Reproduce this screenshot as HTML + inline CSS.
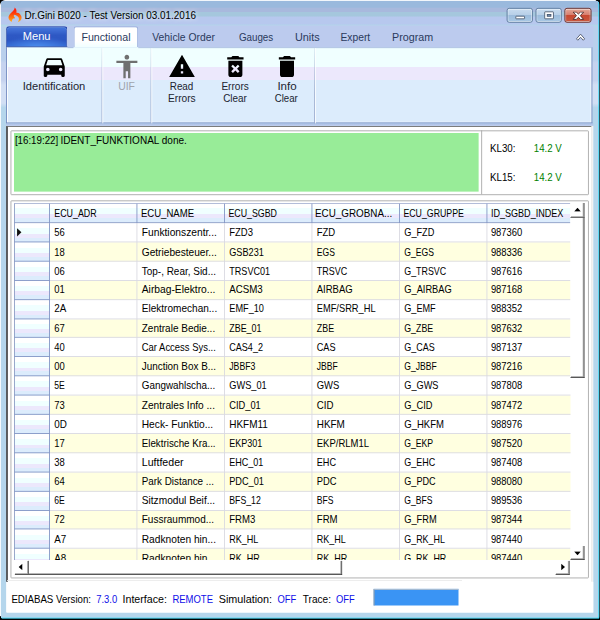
<!DOCTYPE html>
<html lang="en">
<head>
<meta charset="utf-8">
<title>Dr.Gini B020 - Test Version 03.01.2016</title>
<style>

html,body{margin:0;padding:0;background:#fff;}
body{width:600px;height:620px;overflow:hidden;position:relative;font-family:"Liberation Sans", sans-serif;}
#root{position:absolute;left:0;top:0;width:686px;height:709px;transform:scale(0.875);transform-origin:0 0;overflow:hidden;background:#fff;}
#root div,#root span,#root svg{position:absolute;box-sizing:border-box;}
.tx{white-space:pre;line-height:1;transform-origin:0 0;}
#t_title{text-shadow:0 0 5px rgba(255,255,255,.75),0 0 9px rgba(255,255,255,.5);}
.gc{white-space:pre;line-height:1;transform-origin:0 0;font-size:12px;color:#000;}
.hd{background:linear-gradient(#fff 0,#fff 27%,#f0ffff 27%,#f0ffff 55%,#ece8fc 55%,#ece8fc 75%,#dcecfc 75%,#dcecfc 100%);}

</style>
</head>
<body>
<div id="root">
<div style="left:0;top:0;width:686px;height:709px;background:linear-gradient(#b9d0ec 0,#b9d0ec 68px,#c6d3ef 72px,#c6d3ef 92px,#d2dff4 97px,#d2dff4 118px,#b5d6ec 123px,#b5d6ec 100%);"></div>
<div style="left:0;top:0;width:686px;height:30px;background:linear-gradient(#9ab9dd 0,#9ab9dd 28%,#a8b9dd 30%,#a8b9dd 45%,#a5c7dd 47%,#a5c7dd 60%,#b7c8ee 66%,#b7c8ee 92%,#b0d8e8 96%);"></div>
<div style="left:0;top:0;width:686px;height:1px;background:#fff;"></div>
<div style="left:0;top:0;width:1px;height:706px;background:#fff;"></div>
<div style="left:683.5px;top:0;width:1.3px;height:709px;background:#10e0ff;"></div>
<div style="left:684.8px;top:0;width:1.2px;height:709px;background:#000;"></div>
<div style="left:0;top:705.7px;width:686px;height:1.3px;background:#10e0ff;"></div>
<div style="left:0;top:707px;width:686px;height:2px;background:#000;"></div>
<div style="left:0;top:0;width:5px;height:5px;background:radial-gradient(circle at 100% 100%,rgba(0,0,0,0) 4.2px,#000 5px);"></div>
<div style="left:681px;top:0;width:5px;height:5px;background:radial-gradient(circle at 0 100%,rgba(0,0,0,0) 3.8px,#000 4.6px);"></div>
<div style="left:0;top:704px;width:5px;height:5px;background:radial-gradient(circle at 100% 0,rgba(0,0,0,0) 3.8px,#000 4.6px);"></div>
<div style="left:682px;top:705px;width:4px;height:4px;background:radial-gradient(circle at 0 0,rgba(0,0,0,0) 2.8px,#000 3.6px);"></div>
<svg style="left:4.57px;top:4.57px;" width="27.43" height="27.43" viewBox="0 0 600 600"><defs><linearGradient id="fl" x1="0" y1="85" x2="0" y2="445" gradientUnits="userSpaceOnUse"><stop offset="0" stop-color="#ff1208"/><stop offset="0.35" stop-color="#ff360c"/><stop offset="0.7" stop-color="#ff7a10"/><stop offset="1" stop-color="#ffb828"/></linearGradient></defs><path d="M258 80 C292 108 310 150 302 200 C302 212 308 222 318 216 C332 206 350 208 368 225 C402 257 432 300 430 338 C427 385 392 425 335 445 C362 412 372 372 358 335 C342 298 300 272 258 258 C240 266 228 282 236 298 C246 314 266 326 262 344 C256 358 238 356 222 352 C200 368 184 402 186 441 C148 425 103 382 103 328 C103 272 150 228 198 184 C234 152 254 120 258 80 Z" fill="url(#fl)"/></svg>
<div style="left:579.2px;top:9px;width:30px;height:17px;border:1px solid #5c7a9c;border-radius:3px;background:linear-gradient(#c8dcf0 0,#b8d0e8 45%,#9cbcdc 50%,#a8c8e4 100%);box-shadow:inset 0 0 0 1px rgba(255,255,255,0.55);"></div>
<div style="left:612px;top:9px;width:30px;height:17px;border:1px solid #5c7a9c;border-radius:3px;background:linear-gradient(#c8dcf0 0,#b8d0e8 45%,#9cbcdc 50%,#a8c8e4 100%);box-shadow:inset 0 0 0 1px rgba(255,255,255,0.55);"></div>
<div style="left:644.6px;top:9px;width:31px;height:17px;border:1px solid #6a2a22;border-radius:3px;background:linear-gradient(#e4a898 0,#d88070 45%,#c84830 50%,#c85840 100%);box-shadow:inset 0 0 0 1px rgba(255,255,255,0.55);"></div>
<div style="left:589px;top:18px;width:11px;height:4px;background:#fff;border:1px solid #4a5a70;border-radius:1px;"></div>
<div style="left:622px;top:13px;width:11px;height:9px;background:#fff;border:1px solid #4a5a70;border-radius:1px;"></div>
<div style="left:625px;top:16px;width:5px;height:3px;background:#7f9cc0;border:1px solid #4a5a70;"></div>
<svg style="left:654px;top:12.6px;" width="14" height="10" viewBox="0 0 14 10"><path d="M1 0.8 L4.6 0.8 L7 3 L9.4 0.8 L13 0.8 L9.2 4.9 L13 9.2 L9.4 9.2 L7 6.8 L4.6 9.2 L1 9.2 L4.8 4.9 Z" fill="#fff" stroke="#4a2624" stroke-width="1" stroke-linejoin="round"/></svg>
<div style="left:8px;top:29px;width:670px;height:25px;background:#bccbee;"></div>
<div style="left:7.4px;top:29.6px;width:69.8px;height:24.3px;border:1px solid #1c3ca4;border-bottom:none;border-radius:3.5px 3.5px 0 0;background:radial-gradient(ellipse 60% 55% at 50% 100%,rgba(84,156,250,0.75),rgba(84,156,250,0) 100%),linear-gradient(#4878dc 0,#3c6ad2 18%,#2e58c4 40%,#2c56c2 65%,#3268d0 100%);box-shadow:inset 0 1px 0 0 rgba(140,180,240,0.7);"></div>
<div style="left:83.7px;top:30.4px;width:74.6px;height:24px;background:#fff;border:1px solid #9cb0dc;border-bottom:none;border-radius:3px 3px 0 0;background:linear-gradient(#fff 0,#fff 70%,#f0ffff 100%);"></div>
<svg style="left:657.6px;top:38.4px;" width="11" height="9" viewBox="0 0 11 9"><path d="M0.8 6.4 L5.5 1 L10.2 6.4 L8.6 8 L5.5 4.6 L2.4 8 Z" fill="#fff" stroke="#4c5468" stroke-width="1" stroke-linejoin="round"/></svg>
<div style="left:7.3px;top:54px;width:670.2px;height:87.2px;border:1px solid #748cc0;border-top:none;box-shadow:inset 1px 0 0 #fff,inset -1px 0 0 #fff,inset 0 -1px 0 #f4f8ff;background:linear-gradient(#f0ffff 0,#f0ffff 26.2%,#ece8fc 26.2%,#ece8fc 43.2%,#dcecfc 43.2%,#dcecfc 100%);"></div>
<div style="left:7.3px;top:53.4px;width:70px;height:1px;background:#4c64a8;"></div>
<div style="left:77.3px;top:53.5px;width:7px;height:1px;background:#a0b4dc;"></div>
<div style="left:158px;top:53.5px;width:519px;height:1px;background:#a8bce0;"></div>
<div style="left:7.3px;top:141.2px;width:670.7px;height:3px;background:linear-gradient(#a8bce4,#c0d0ee);"></div>
<div style="left:115.89px;top:55px;width:1px;height:85.5px;background:linear-gradient(rgba(160,176,208,0.25),#a4b4d2 60%,#9cacd0);"></div>
<div style="left:116.89px;top:55px;width:1px;height:85.5px;background:rgba(255,255,255,0.85);"></div>
<div style="left:172.34px;top:55px;width:1px;height:85.5px;background:linear-gradient(rgba(160,176,208,0.25),#a4b4d2 60%,#9cacd0);"></div>
<div style="left:173.34px;top:55px;width:1px;height:85.5px;background:rgba(255,255,255,0.85);"></div>
<div style="left:358.74px;top:55px;width:1px;height:85.5px;background:linear-gradient(rgba(160,176,208,0.25),#a4b4d2 60%,#9cacd0);"></div>
<div style="left:359.74px;top:55px;width:1px;height:85.5px;background:rgba(255,255,255,0.85);"></div>
<svg style="left:45.94px;top:59.9px;" width="32" height="32" viewBox="0 0 24 24"><path d="M18.92 6.01C18.72 5.42 18.16 5 17.5 5h-11c-.66 0-1.21.42-1.42 1.01L3 12v8c0 .55.45 1 1 1h1c.55 0 1-.45 1-1v-1h12v1c0 .55.45 1 1 1h1c.55 0 1-.45 1-1v-8l-2.080-5.990zM6.500 16c-.83 0-1.500-.67-1.500-1.500S5.670 13 6.500 13s1.500.67 1.500 1.500S7.330 16 6.500 16zm11 0c-.83 0-1.500-.67-1.500-1.500s.67-1.500 1.500-1.500 1.500.67 1.500 1.500-.67 1.500-1.500 1.500zM5 11l1.500-4.500h11L19 11H5z" fill="#000"/></svg>
<svg style="left:128.69px;top:59.9px;" width="32" height="32" viewBox="0 0 24 24"><path d="M12 2c1.100 0 2 .9 2 2s-.9 2-2 2-2-.9-2-2 .9-2 2-2zm9 7h-6v13h-2v-6h-2v6H9V9H3V7h18v2z" fill="#707070"/></svg>
<svg style="left:191.77px;top:59.9px;" width="32" height="32" viewBox="0 0 24 24"><path d="M1 21h22L12 2 1 21zm12-3h-2v-2h2v2zm0-4h-2v-4h2v4z" fill="#000"/></svg>
<svg style="left:252.74px;top:59.9px;" width="32" height="32" viewBox="0 0 24 24"><path d="M6 19c0 1.100.9 2 2 2h8c1.100 0 2-.9 2-2V7H6v12zm2.460-7.120l1.410-1.410L12 12.590l2.120-2.120 1.410 1.410L13.410 14l2.120 2.120-1.410 1.410L12 15.410l-2.120 2.120-1.410-1.410L10.590 14l-2.130-2.120zM15.500 4l-1-1h-5l-1 1H5v2h14V4z" fill="#000"/></svg>
<svg style="left:311.89px;top:59.9px;" width="32" height="32" viewBox="0 0 24 24"><path d="M6 19c0 1.100.9 2 2 2h8c1.100 0 2-.9 2-2V7H6v12zM19 4h-3.500l-1-1h-5l-1 1H5v2h14V4z" fill="#000"/></svg>
<div style="left:8px;top:144px;width:670px;height:556.4px;background:#fff;"></div>
<div style="left:7.3px;top:143.5px;width:1.6px;height:521px;background:#4a4a4a;"></div>
<div style="left:7.3px;top:143.5px;width:669px;height:1.2px;background:#6a6a6a;"></div>
<div style="left:675.5px;top:144px;width:1.2px;height:521px;background:#dcdcdc;"></div>
<div style="left:11.7px;top:148.6px;width:661.2px;height:74.2px;border:1.1px solid #a6a6a6;border-radius:1.2px;background:#fff;"></div>
<div style="left:15.8px;top:152.4px;width:531.3px;height:66.2px;background:#98ec98;"></div>
<div style="left:549.6px;top:149px;width:1.1px;height:73px;background:#a6a6a6;"></div>
<div style="left:11.7px;top:229px;width:661.2px;height:432px;border:1.1px solid #a6a6a6;border-radius:1.2px;background:#fff;"></div>
<div style="left:16.0px;top:232.4px;width:636px;height:408px;overflow:hidden;">
<div class="hd" style="left:0;top:0;width:636px;height:22.7px;"></div>
<div style="left:41.4px;top:22.7px;width:600px;height:21.9px;background:#fff;"></div>
<div class="hd" style="left:0;top:22.7px;width:41.4px;height:21.9px;"></div>
<div style="left:41.4px;top:44.6px;width:600px;height:21.9px;background:#ffffe0;"></div>
<div class="hd" style="left:0;top:44.6px;width:41.4px;height:21.9px;"></div>
<div style="left:41.4px;top:66.5px;width:600px;height:21.9px;background:#fff;"></div>
<div class="hd" style="left:0;top:66.5px;width:41.4px;height:21.9px;"></div>
<div style="left:41.4px;top:88.4px;width:600px;height:21.9px;background:#ffffe0;"></div>
<div class="hd" style="left:0;top:88.4px;width:41.4px;height:21.9px;"></div>
<div style="left:41.4px;top:110.3px;width:600px;height:21.9px;background:#fff;"></div>
<div class="hd" style="left:0;top:110.3px;width:41.4px;height:21.9px;"></div>
<div style="left:41.4px;top:132.2px;width:600px;height:21.9px;background:#ffffe0;"></div>
<div class="hd" style="left:0;top:132.2px;width:41.4px;height:21.9px;"></div>
<div style="left:41.4px;top:154.1px;width:600px;height:21.9px;background:#fff;"></div>
<div class="hd" style="left:0;top:154.1px;width:41.4px;height:21.9px;"></div>
<div style="left:41.4px;top:176.0px;width:600px;height:21.9px;background:#ffffe0;"></div>
<div class="hd" style="left:0;top:176.0px;width:41.4px;height:21.9px;"></div>
<div style="left:41.4px;top:197.9px;width:600px;height:21.9px;background:#fff;"></div>
<div class="hd" style="left:0;top:197.9px;width:41.4px;height:21.9px;"></div>
<div style="left:41.4px;top:219.8px;width:600px;height:21.9px;background:#ffffe0;"></div>
<div class="hd" style="left:0;top:219.8px;width:41.4px;height:21.9px;"></div>
<div style="left:41.4px;top:241.7px;width:600px;height:21.9px;background:#fff;"></div>
<div class="hd" style="left:0;top:241.7px;width:41.4px;height:21.9px;"></div>
<div style="left:41.4px;top:263.6px;width:600px;height:21.9px;background:#ffffe0;"></div>
<div class="hd" style="left:0;top:263.6px;width:41.4px;height:21.9px;"></div>
<div style="left:41.4px;top:285.5px;width:600px;height:21.9px;background:#fff;"></div>
<div class="hd" style="left:0;top:285.5px;width:41.4px;height:21.9px;"></div>
<div style="left:41.4px;top:307.4px;width:600px;height:21.9px;background:#ffffe0;"></div>
<div class="hd" style="left:0;top:307.4px;width:41.4px;height:21.9px;"></div>
<div style="left:41.4px;top:329.3px;width:600px;height:21.9px;background:#fff;"></div>
<div class="hd" style="left:0;top:329.3px;width:41.4px;height:21.9px;"></div>
<div style="left:41.4px;top:351.2px;width:600px;height:21.9px;background:#ffffe0;"></div>
<div class="hd" style="left:0;top:351.2px;width:41.4px;height:21.9px;"></div>
<div style="left:41.4px;top:373.1px;width:600px;height:21.9px;background:#fff;"></div>
<div class="hd" style="left:0;top:373.1px;width:41.4px;height:21.9px;"></div>
<div style="left:41.4px;top:395.0px;width:600px;height:21.9px;background:#ffffe0;"></div>
<div class="hd" style="left:0;top:395.0px;width:41.4px;height:21.9px;"></div>
<div style="left:0;top:21.7px;width:636px;height:1.2px;background:#8c9cc4;"></div>
<div style="left:41.4px;top:43.6px;width:600px;height:1px;background:#d9d9e1;"></div>
<div style="left:0;top:43.6px;width:41.4px;height:1px;background:#8094c4;"></div>
<div style="left:41.4px;top:65.5px;width:600px;height:1px;background:#d9d9e1;"></div>
<div style="left:0;top:65.5px;width:41.4px;height:1px;background:#8094c4;"></div>
<div style="left:41.4px;top:87.4px;width:600px;height:1px;background:#d9d9e1;"></div>
<div style="left:0;top:87.4px;width:41.4px;height:1px;background:#8094c4;"></div>
<div style="left:41.4px;top:109.3px;width:600px;height:1px;background:#d9d9e1;"></div>
<div style="left:0;top:109.3px;width:41.4px;height:1px;background:#8094c4;"></div>
<div style="left:41.4px;top:131.2px;width:600px;height:1px;background:#d9d9e1;"></div>
<div style="left:0;top:131.2px;width:41.4px;height:1px;background:#8094c4;"></div>
<div style="left:41.4px;top:153.1px;width:600px;height:1px;background:#d9d9e1;"></div>
<div style="left:0;top:153.1px;width:41.4px;height:1px;background:#8094c4;"></div>
<div style="left:41.4px;top:175.0px;width:600px;height:1px;background:#d9d9e1;"></div>
<div style="left:0;top:175.0px;width:41.4px;height:1px;background:#8094c4;"></div>
<div style="left:41.4px;top:196.9px;width:600px;height:1px;background:#d9d9e1;"></div>
<div style="left:0;top:196.9px;width:41.4px;height:1px;background:#8094c4;"></div>
<div style="left:41.4px;top:218.8px;width:600px;height:1px;background:#d9d9e1;"></div>
<div style="left:0;top:218.8px;width:41.4px;height:1px;background:#8094c4;"></div>
<div style="left:41.4px;top:240.7px;width:600px;height:1px;background:#d9d9e1;"></div>
<div style="left:0;top:240.7px;width:41.4px;height:1px;background:#8094c4;"></div>
<div style="left:41.4px;top:262.6px;width:600px;height:1px;background:#d9d9e1;"></div>
<div style="left:0;top:262.6px;width:41.4px;height:1px;background:#8094c4;"></div>
<div style="left:41.4px;top:284.5px;width:600px;height:1px;background:#d9d9e1;"></div>
<div style="left:0;top:284.5px;width:41.4px;height:1px;background:#8094c4;"></div>
<div style="left:41.4px;top:306.4px;width:600px;height:1px;background:#d9d9e1;"></div>
<div style="left:0;top:306.4px;width:41.4px;height:1px;background:#8094c4;"></div>
<div style="left:41.4px;top:328.3px;width:600px;height:1px;background:#d9d9e1;"></div>
<div style="left:0;top:328.3px;width:41.4px;height:1px;background:#8094c4;"></div>
<div style="left:41.4px;top:350.2px;width:600px;height:1px;background:#d9d9e1;"></div>
<div style="left:0;top:350.2px;width:41.4px;height:1px;background:#8094c4;"></div>
<div style="left:41.4px;top:372.1px;width:600px;height:1px;background:#d9d9e1;"></div>
<div style="left:0;top:372.1px;width:41.4px;height:1px;background:#8094c4;"></div>
<div style="left:41.4px;top:394.0px;width:600px;height:1px;background:#d9d9e1;"></div>
<div style="left:0;top:394.0px;width:41.4px;height:1px;background:#8094c4;"></div>
<div style="left:41.4px;top:415.9px;width:600px;height:1px;background:#d9d9e1;"></div>
<div style="left:0;top:415.9px;width:41.4px;height:1px;background:#8094c4;"></div>
<div style="left:40.4px;top:0;width:1px;height:22.7px;background:#8094c4;"></div>
<div style="left:40.4px;top:22.7px;width:1px;height:410px;background:#8094c4;"></div>
<div style="left:140.4px;top:0;width:1px;height:22.7px;background:#8094c4;"></div>
<div style="left:140.4px;top:22.7px;width:1px;height:410px;background:#d9d9e1;"></div>
<div style="left:240.4px;top:0;width:1px;height:22.7px;background:#8094c4;"></div>
<div style="left:240.4px;top:22.7px;width:1px;height:410px;background:#d9d9e1;"></div>
<div style="left:340.4px;top:0;width:1px;height:22.7px;background:#8094c4;"></div>
<div style="left:340.4px;top:22.7px;width:1px;height:410px;background:#d9d9e1;"></div>
<div style="left:440.4px;top:0;width:1px;height:22.7px;background:#8094c4;"></div>
<div style="left:440.4px;top:22.7px;width:1px;height:410px;background:#d9d9e1;"></div>
<div style="left:540.4px;top:0;width:1px;height:22.7px;background:#8094c4;"></div>
<div style="left:540.4px;top:22.7px;width:1px;height:410px;background:#d9d9e1;"></div>
<div style="left:0;top:0;width:1px;height:409px;background:#8c9cc4;"></div>
<div style="left:0;top:0;width:636px;height:1px;background:#a8b4d4;"></div>
<svg style="left:2.6px;top:27.7px;" width="6" height="11" viewBox="0 0 6 11"><path d="M0.5 0.8 L5.5 5.5 L0.5 10.2 Z" fill="#111"/></svg>
<span class="gc" style="left:45.6px;top:27.4px;transform:scaleX(0.899);">56</span>
<span class="gc" style="left:145.6px;top:27.4px;transform:scaleX(0.975);">Funktionszentr...</span>
<span class="gc" style="left:245.6px;top:27.4px;transform:scaleX(0.9041);">FZD3</span>
<span class="gc" style="left:345.6px;top:27.4px;transform:scaleX(0.9055);">FZD</span>
<span class="gc" style="left:445.6px;top:27.4px;transform:scaleX(0.8732);">G_FZD</span>
<span class="gc" style="left:544.6px;top:27.4px;transform:scaleX(0.899);">987360</span>
<span class="gc" style="left:45.6px;top:49.3px;transform:scaleX(0.899);">18</span>
<span class="gc" style="left:145.6px;top:49.3px;transform:scaleX(0.9664);">Getriebesteuer...</span>
<span class="gc" style="left:245.6px;top:49.3px;transform:scaleX(0.8706);">GSB231</span>
<span class="gc" style="left:345.6px;top:49.3px;transform:scaleX(0.8162);">EGS</span>
<span class="gc" style="left:445.6px;top:49.3px;transform:scaleX(0.82);">G_EGS</span>
<span class="gc" style="left:544.6px;top:49.3px;transform:scaleX(0.899);">988336</span>
<span class="gc" style="left:45.6px;top:71.2px;transform:scaleX(0.899);">06</span>
<span class="gc" style="left:145.6px;top:71.2px;transform:scaleX(0.949);">Top-, Rear, Sid...</span>
<span class="gc" style="left:245.6px;top:71.2px;transform:scaleX(0.8647);">TRSVC01</span>
<span class="gc" style="left:345.6px;top:71.2px;transform:scaleX(0.8535);">TRSVC</span>
<span class="gc" style="left:445.6px;top:71.2px;transform:scaleX(0.8458);">G_TRSVC</span>
<span class="gc" style="left:544.6px;top:71.2px;transform:scaleX(0.899);">987616</span>
<span class="gc" style="left:45.6px;top:93.1px;transform:scaleX(0.899);">01</span>
<span class="gc" style="left:145.6px;top:93.1px;transform:scaleX(0.9776);">Airbag-Elektro...</span>
<span class="gc" style="left:245.6px;top:93.1px;transform:scaleX(0.9267);">ACSM3</span>
<span class="gc" style="left:345.6px;top:93.1px;transform:scaleX(0.9037);">AIRBAG</span>
<span class="gc" style="left:445.6px;top:93.1px;transform:scaleX(0.8835);">G_AIRBAG</span>
<span class="gc" style="left:544.6px;top:93.1px;transform:scaleX(0.899);">987168</span>
<span class="gc" style="left:45.6px;top:115.0px;transform:scaleX(0.9361);">2A</span>
<span class="gc" style="left:145.6px;top:115.0px;transform:scaleX(0.9578);">Elektromechan...</span>
<span class="gc" style="left:245.6px;top:115.0px;transform:scaleX(0.8749);">EMF_10</span>
<span class="gc" style="left:345.6px;top:115.0px;transform:scaleX(0.8848);">EMF/SRR_HL</span>
<span class="gc" style="left:445.6px;top:115.0px;transform:scaleX(0.869);">G_EMF</span>
<span class="gc" style="left:544.6px;top:115.0px;transform:scaleX(0.899);">988352</span>
<span class="gc" style="left:45.6px;top:136.9px;transform:scaleX(0.899);">67</span>
<span class="gc" style="left:145.6px;top:136.9px;transform:scaleX(0.9531);">Zentrale Bedie...</span>
<span class="gc" style="left:245.6px;top:136.9px;transform:scaleX(0.8482);">ZBE_01</span>
<span class="gc" style="left:345.6px;top:136.9px;transform:scaleX(0.8483);">ZBE</span>
<span class="gc" style="left:445.6px;top:136.9px;transform:scaleX(0.8393);">G_ZBE</span>
<span class="gc" style="left:544.6px;top:136.9px;transform:scaleX(0.899);">987632</span>
<span class="gc" style="left:45.6px;top:158.8px;transform:scaleX(0.899);">40</span>
<span class="gc" style="left:145.6px;top:158.8px;transform:scaleX(0.8999);">Car Access Sys...</span>
<span class="gc" style="left:245.6px;top:158.8px;transform:scaleX(0.8618);">CAS4_2</span>
<span class="gc" style="left:345.6px;top:158.8px;transform:scaleX(0.8729);">CAS</span>
<span class="gc" style="left:445.6px;top:158.8px;transform:scaleX(0.8545);">G_CAS</span>
<span class="gc" style="left:544.6px;top:158.8px;transform:scaleX(0.899);">987137</span>
<span class="gc" style="left:45.6px;top:180.7px;transform:scaleX(0.899);">00</span>
<span class="gc" style="left:145.6px;top:180.7px;transform:scaleX(0.9428);">Junction Box B...</span>
<span class="gc" style="left:245.6px;top:180.7px;transform:scaleX(0.8301);">JBBF3</span>
<span class="gc" style="left:345.6px;top:180.7px;transform:scaleX(0.8144);">JBBF</span>
<span class="gc" style="left:445.6px;top:180.7px;transform:scaleX(0.8186);">G_JBBF</span>
<span class="gc" style="left:544.6px;top:180.7px;transform:scaleX(0.899);">987216</span>
<span class="gc" style="left:45.6px;top:202.6px;transform:scaleX(0.8223);">5E</span>
<span class="gc" style="left:145.6px;top:202.6px;transform:scaleX(0.9399);">Gangwahlscha...</span>
<span class="gc" style="left:245.6px;top:202.6px;transform:scaleX(0.8789);">GWS_01</span>
<span class="gc" style="left:345.6px;top:202.6px;transform:scaleX(0.9004);">GWS</span>
<span class="gc" style="left:445.6px;top:202.6px;transform:scaleX(0.8738);">G_GWS</span>
<span class="gc" style="left:544.6px;top:202.6px;transform:scaleX(0.899);">987808</span>
<span class="gc" style="left:45.6px;top:224.5px;transform:scaleX(0.899);">73</span>
<span class="gc" style="left:145.6px;top:224.5px;transform:scaleX(0.9652);">Zentrales Info ...</span>
<span class="gc" style="left:245.6px;top:224.5px;transform:scaleX(0.8854);">CID_01</span>
<span class="gc" style="left:345.6px;top:224.5px;transform:scaleX(0.9214);">CID</span>
<span class="gc" style="left:445.6px;top:224.5px;transform:scaleX(0.8798);">G_CID</span>
<span class="gc" style="left:544.6px;top:224.5px;transform:scaleX(0.899);">987472</span>
<span class="gc" style="left:45.6px;top:246.4px;transform:scaleX(0.94);">0D</span>
<span class="gc" style="left:145.6px;top:246.4px;transform:scaleX(0.9713);">Heck- Funktio...</span>
<span class="gc" style="left:245.6px;top:246.4px;transform:scaleX(0.9494);">HKFM11</span>
<span class="gc" style="left:345.6px;top:246.4px;transform:scaleX(0.9443);">HKFM</span>
<span class="gc" style="left:445.6px;top:246.4px;transform:scaleX(0.9065);">G_HKFM</span>
<span class="gc" style="left:544.6px;top:246.4px;transform:scaleX(0.899);">988976</span>
<span class="gc" style="left:45.6px;top:268.3px;transform:scaleX(0.899);">17</span>
<span class="gc" style="left:145.6px;top:268.3px;transform:scaleX(0.9303);">Elektrische Kra...</span>
<span class="gc" style="left:245.6px;top:268.3px;transform:scaleX(0.8577);">EKP301</span>
<span class="gc" style="left:345.6px;top:268.3px;transform:scaleX(0.9042);">EKP/RLM1L</span>
<span class="gc" style="left:445.6px;top:268.3px;transform:scaleX(0.8244);">G_EKP</span>
<span class="gc" style="left:544.6px;top:268.3px;transform:scaleX(0.899);">987520</span>
<span class="gc" style="left:45.6px;top:290.2px;transform:scaleX(0.899);">38</span>
<span class="gc" style="left:145.6px;top:290.2px;transform:scaleX(1.009);">Luftfeder</span>
<span class="gc" style="left:245.6px;top:290.2px;transform:scaleX(0.8598);">EHC_01</span>
<span class="gc" style="left:345.6px;top:290.2px;transform:scaleX(0.8691);">EHC</span>
<span class="gc" style="left:445.6px;top:290.2px;transform:scaleX(0.8525);">G_EHC</span>
<span class="gc" style="left:544.6px;top:290.2px;transform:scaleX(0.899);">987408</span>
<span class="gc" style="left:45.6px;top:312.1px;transform:scaleX(0.899);">64</span>
<span class="gc" style="left:145.6px;top:312.1px;transform:scaleX(0.9379);">Park Distance ...</span>
<span class="gc" style="left:245.6px;top:312.1px;transform:scaleX(0.8725);">PDC_01</span>
<span class="gc" style="left:345.6px;top:312.1px;transform:scaleX(0.8918);">PDC</span>
<span class="gc" style="left:445.6px;top:312.1px;transform:scaleX(0.8664);">G_PDC</span>
<span class="gc" style="left:544.6px;top:312.1px;transform:scaleX(0.899);">988080</span>
<span class="gc" style="left:45.6px;top:334.0px;transform:scaleX(0.8223);">6E</span>
<span class="gc" style="left:145.6px;top:334.0px;transform:scaleX(0.9678);">Sitzmodul Beif...</span>
<span class="gc" style="left:245.6px;top:334.0px;transform:scaleX(0.8322);">BFS_12</span>
<span class="gc" style="left:345.6px;top:334.0px;transform:scaleX(0.8184);">BFS</span>
<span class="gc" style="left:445.6px;top:334.0px;transform:scaleX(0.8216);">G_BFS</span>
<span class="gc" style="left:544.6px;top:334.0px;transform:scaleX(0.899);">989536</span>
<span class="gc" style="left:45.6px;top:355.9px;transform:scaleX(0.899);">72</span>
<span class="gc" style="left:145.6px;top:355.9px;transform:scaleX(0.9537);">Fussraummod...</span>
<span class="gc" style="left:245.6px;top:355.9px;transform:scaleX(0.9126);">FRM3</span>
<span class="gc" style="left:345.6px;top:355.9px;transform:scaleX(0.9161);">FRM</span>
<span class="gc" style="left:445.6px;top:355.9px;transform:scaleX(0.8818);">G_FRM</span>
<span class="gc" style="left:544.6px;top:355.9px;transform:scaleX(0.899);">987344</span>
<span class="gc" style="left:45.6px;top:377.8px;transform:scaleX(0.9361);">A7</span>
<span class="gc" style="left:145.6px;top:377.8px;transform:scaleX(0.9711);">Radknoten hin...</span>
<span class="gc" style="left:245.6px;top:377.8px;transform:scaleX(0.8605);">RK_HL</span>
<span class="gc" style="left:345.6px;top:377.8px;transform:scaleX(0.8605);">RK_HL</span>
<span class="gc" style="left:445.6px;top:377.8px;transform:scaleX(0.8504);">G_RK_HL</span>
<span class="gc" style="left:544.6px;top:377.8px;transform:scaleX(0.899);">987440</span>
<span class="gc" style="left:45.6px;top:399.7px;transform:scaleX(0.9361);">A8</span>
<span class="gc" style="left:145.6px;top:399.7px;transform:scaleX(0.9711);">Radknoten hin...</span>
<span class="gc" style="left:245.6px;top:399.7px;transform:scaleX(0.8561);">RK_HR</span>
<span class="gc" style="left:345.6px;top:399.7px;transform:scaleX(0.8561);">RK_HR</span>
<span class="gc" style="left:445.6px;top:399.7px;transform:scaleX(0.8476);">G_RK_HR</span>
<span class="gc" style="left:544.6px;top:399.7px;transform:scaleX(0.899);">987440</span>
</div>
<div style="left:652.0px;top:232.4px;width:16.4px;height:16.2px;background:#fff;border-right:1.5px solid #404040;border-bottom:1.5px solid #404040;box-shadow:inset -1px -1px 0 #a0a0a0;"></div>
<div style="left:652.0px;top:248.6px;width:16.4px;height:182.94px;background:#fff;border-right:1.5px solid #404040;border-bottom:1.5px solid #404040;box-shadow:inset -1px -1px 0 #a0a0a0;"></div>
<div style="left:652.0px;top:624.23px;width:16.4px;height:16.2px;background:#fff;border-right:1.5px solid #404040;border-bottom:1.5px solid #404040;box-shadow:inset -1px -1px 0 #a0a0a0;"></div>
<div style="left:16.6px;top:640.69px;width:16.2px;height:16.2px;background:#fff;border-right:1.5px solid #404040;border-bottom:1.5px solid #404040;box-shadow:inset -1px -1px 0 #a0a0a0;"></div>
<div style="left:635.2px;top:640.69px;width:16.2px;height:16.2px;background:#fff;border-right:1.5px solid #404040;border-bottom:1.5px solid #404040;box-shadow:inset -1px -1px 0 #a0a0a0;"></div>
<div style="left:32.8px;top:640.69px;width:358.29px;height:16.2px;background:#fff;border-right:1.5px solid #404040;border-bottom:1.5px solid #404040;box-shadow:inset -1px -1px 0 #a0a0a0;"></div>
<svg style="left:655.6px;top:237.4px;" width="8" height="5" viewBox="0 0 8 5"><path d="M4 0.3 L7.8 4.6 L0.2 4.6 Z" fill="#000"/></svg>
<svg style="left:655.6px;top:630.23px;" width="8" height="5" viewBox="0 0 8 5"><path d="M4 4.7 L7.8 0.4 L0.2 0.4 Z" fill="#000"/></svg>
<svg style="left:21.0px;top:644.49px;" width="5" height="8" viewBox="0 0 5 8"><path d="M0.3 4 L4.6 0.2 L4.6 7.8 Z" fill="#000"/></svg>
<svg style="left:640.8px;top:644.49px;" width="5" height="8" viewBox="0 0 5 8"><path d="M4.7 4 L0.4 0.2 L0.4 7.8 Z" fill="#000"/></svg>
<div style="left:7px;top:665px;width:671px;height:35.4px;background:#fff;"></div>
<div style="left:426.86px;top:673.03px;width:97.14px;height:19.43px;background:#3a94f4;border-top:1px solid #c8c8c8;border-left:1px solid #a0a0a0;"></div>
<div style="left:8px;top:663.2px;width:520.0px;height:1px;background:#ebebeb;"></div>
<span id="t_title" class="tx" style="left:28.32px;top:11.78px;font-size:12px;color:#000;transform:scaleX(0.9454);">Dr.Gini B020 - Test Version 03.01.2016</span>
<span id="t_menu" class="tx" style="left:25.57px;top:36.35px;font-size:12px;color:#fff;transform:scaleX(1.0559);">Menu</span>
<span id="t_tab1" class="tx" style="left:92.81px;top:37.15px;font-size:12px;color:#2a3a5c;transform:scaleX(1.0147);">Functional</span>
<span id="t_tab2" class="tx" style="left:174.17px;top:37.15px;font-size:12px;color:#2a3a5c;transform:scaleX(0.9852);">Vehicle Order</span>
<span id="t_tab3" class="tx" style="left:273.13px;top:37.15px;font-size:12px;color:#2a3a5c;transform:scaleX(0.9338);">Gauges</span>
<span id="t_tab4" class="tx" style="left:336.57px;top:37.15px;font-size:12px;color:#2a3a5c;transform:scaleX(1.033);">Units</span>
<span id="t_tab5" class="tx" style="left:389.19px;top:37.15px;font-size:12px;color:#2a3a5c;transform:scaleX(0.982);">Expert</span>
<span id="t_tab6" class="tx" style="left:448.01px;top:37.15px;font-size:12px;color:#2a3a5c;transform:scaleX(1.0202);">Program</span>
<span id="t_b1" class="tx" style="left:25.8px;top:92.93px;font-size:12px;color:#202430;transform:scaleX(1.0609);">Identification</span>
<span id="t_b2" class="tx" style="left:134.67px;top:92.93px;font-size:12px;color:#a0a4ac;transform:scaleX(0.9905);">UIF</span>
<span id="t_b3a" class="tx" style="left:193.8px;top:93.04px;font-size:12px;color:#202430;transform:scaleX(0.9397);">Read</span>
<span id="t_b3b" class="tx" style="left:191.72px;top:107.44px;font-size:12px;color:#202430;transform:scaleX(0.9655);">Errors</span>
<span id="t_b4a" class="tx" style="left:252.75px;top:93.04px;font-size:12px;color:#202430;transform:scaleX(0.9582);">Errors</span>
<span id="t_b4b" class="tx" style="left:255.07px;top:107.44px;font-size:12px;color:#202430;transform:scaleX(0.9429);">Clear</span>
<span id="t_b5a" class="tx" style="left:316.84px;top:93.04px;font-size:12px;color:#202430;transform:scaleX(1.0996);">Info</span>
<span id="t_b5b" class="tx" style="left:314.4px;top:107.44px;font-size:12px;color:#202430;transform:scaleX(0.9184);">Clear</span>
<span id="t_log" class="tx" style="left:17.13px;top:153.61px;font-size:12px;color:#000;transform:scaleX(0.9275);">[16:19:22]</span>
<span id="t_log2" class="tx" style="left:69.11px;top:153.61px;font-size:12px;color:#000;transform:scaleX(0.9533);">IDENT_FUNKTIONAL done.</span>
<span id="t_kl30" class="tx" style="left:559.76px;top:163.55px;font-size:12px;color:#000;transform:scaleX(0.9299);">KL30:</span>
<span id="t_kl30v" class="tx" style="left:609.82px;top:163.55px;font-size:12px;color:#008000;transform:scaleX(0.9211);">14.2 V</span>
<span id="t_kl15" class="tx" style="left:559.76px;top:196.7px;font-size:12px;color:#000;transform:scaleX(0.9299);">KL15:</span>
<span id="t_kl15v" class="tx" style="left:609.82px;top:196.7px;font-size:12px;color:#008000;transform:scaleX(0.9211);">14.2 V</span>
<span id="t_h1" class="tx" style="left:61.95px;top:237.73px;font-size:12px;color:#000;transform:scaleX(0.8456);">ECU_ADR</span>
<span id="t_h2" class="tx" style="left:161.03px;top:237.73px;font-size:12px;color:#000;transform:scaleX(0.9108);">ECU_NAME</span>
<span id="t_h3" class="tx" style="left:261.1px;top:237.73px;font-size:12px;color:#000;transform:scaleX(0.8416);">ECU_SGBD</span>
<span id="t_h4" class="tx" style="left:360.43px;top:237.73px;font-size:12px;color:#000;transform:scaleX(0.9379);">ECU_GROBNA...</span>
<span id="t_h5" class="tx" style="left:460.53px;top:237.73px;font-size:12px;color:#000;transform:scaleX(0.8369);">ECU_GRUPPE</span>
<span id="t_h6" class="tx" style="left:560.51px;top:237.73px;font-size:12px;color:#000;transform:scaleX(0.8624);">ID_SGBD_INDEX</span>
<span id="t_s1" class="tx" style="left:12.83px;top:679.02px;font-size:12.5px;color:#000;transform:scaleX(0.8848);">EDIABAS Version:</span>
<span id="t_s2" class="tx" style="left:110.21px;top:679.02px;font-size:12.5px;color:#1010e8;transform:scaleX(0.8625);">7.3.0</span>
<span id="t_s3" class="tx" style="left:140.49px;top:679.02px;font-size:12.5px;color:#000;transform:scaleX(0.9763);">Interface:</span>
<span id="t_s4" class="tx" style="left:197.42px;top:679.02px;font-size:12.5px;color:#1010e8;transform:scaleX(0.8681);">REMOTE</span>
<span id="t_s5" class="tx" style="left:250.37px;top:679.02px;font-size:12.5px;color:#000;transform:scaleX(0.9864);">Simulation:</span>
<span id="t_s6" class="tx" style="left:317.28px;top:679.02px;font-size:12.5px;color:#1010e8;transform:scaleX(0.8571);">OFF</span>
<span id="t_s7" class="tx" style="left:346.06px;top:679.02px;font-size:12.5px;color:#000;transform:scaleX(0.9211);">Trace:</span>
<span id="t_s8" class="tx" style="left:384.14px;top:679.02px;font-size:12.5px;color:#1010e8;transform:scaleX(0.8571);">OFF</span>
</div>
</body>
</html>
